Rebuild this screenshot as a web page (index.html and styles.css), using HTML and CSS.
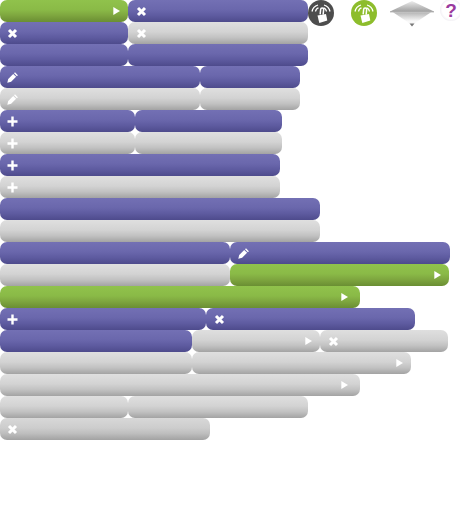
FILE: index.html
```html
<!DOCTYPE html>
<html lang="en">
<head>
  <meta charset="UTF-8">
  <title>Buttons</title>
  <link rel="stylesheet" href="styles.css">
</head>
<body>

  <svg class="defs" width="0" height="0">
    <symbol id="i-x" viewBox="0 0 11 11"><path d="M2 2l7 7M9 2l-7 7" fill="none" stroke="currentColor" stroke-width="3"/></symbol>
    <symbol id="i-plus" viewBox="0 0 11 11"><path d="M5.5 0.5v10M0.500 5.500h10" fill="none" stroke="currentColor" stroke-width="2.400"/></symbol>
    <symbol id="i-pen" viewBox="0 0 11 11"><path d="M0.300 10.700l0.900-3.800 5-5 2.900 2.900-5 5zM7 1.300l1-1 2.900 2.900-1 1z" fill="currentColor"/></symbol>
    <symbol id="i-arrow" viewBox="0 0 7 8"><path d="M0.300 0l6.700 4-6.700 4z" fill="currentColor"/></symbol>
    <symbol id="i-touch" viewBox="0 0 26 26">
      <path d="M4 11.500Q5 6.500 10 5M7.500 11.500Q8 8.500 10.500 7.800M22 11.500Q21 6.500 16 5M18.500 11.500Q18 8.500 15.500 7.800" fill="none" stroke="#fff" stroke-width="1.300"/>
      <path d="M12.500 14.500v-5a1.500 1.500 0 0 1 3 0v5" fill="none" stroke="#fff" stroke-width="1.500" transform="rotate(6 14 11)"/>
      <path d="M9.500 15.500l8.500-1.500 1.300 6.500-8 2.500z" fill="#fff"/>
    </symbol>
  </svg>

  <div class="row">
    <div class="seg green w128 end"><svg class="arrow"><use href="#i-arrow"/></svg></div>
    <div class="seg purple w180"><svg class="ico"><use href="#i-x"/></svg></div>
    <div class="tools">
      <svg class="round dark"><use href="#i-touch"/></svg>
      <svg class="round lime"><use href="#i-touch"/></svg>
      <svg class="diamond" viewBox="0 0 44 27">
        <defs>
          <linearGradient id="upper" x1="0" y1="0" x2="0" y2="1">
            <stop offset="0" stop-color="#ececec"/>
            <stop offset="1" stop-color="#a0a0a0"/>
          </linearGradient>
          <linearGradient id="lower" x1="0" y1="0" x2="0" y2="1">
            <stop offset="0" stop-color="#b4b4b4"/>
            <stop offset="0.7" stop-color="#fafafa"/>
            <stop offset="1" stop-color="#f0f0f0"/>
          </linearGradient>
        </defs>
        <path d="M22 1L44 11.500H0z" fill="url(#upper)"/>
        <path d="M0 11.500h44v0.800H0z" fill="#858585"/>
        <path d="M3 12.300h38L22 25z" fill="url(#lower)"/>
        <path d="M19.500 23.500h5l-2.500 3z" fill="#777"/>
      </svg>
      <div class="help">?</div>
    </div>
  </div>

  <div class="row">
    <div class="seg purple w128"><svg class="ico"><use href="#i-x"/></svg></div>
    <div class="seg gray w180"><svg class="ico"><use href="#i-x"/></svg></div>
  </div>
  <div class="row">
    <div class="seg purple w128"></div>
    <div class="seg purple w180"></div>
  </div>
  <div class="row">
    <div class="seg purple w200"><svg class="ico"><use href="#i-pen"/></svg></div>
    <div class="seg purple w100"></div>
  </div>
  <div class="row">
    <div class="seg gray w200"><svg class="ico"><use href="#i-pen"/></svg></div>
    <div class="seg gray w100"></div>
  </div>
  <div class="row">
    <div class="seg purple w135"><svg class="ico"><use href="#i-plus"/></svg></div>
    <div class="seg purple w147"></div>
  </div>
  <div class="row">
    <div class="seg gray w135"><svg class="ico"><use href="#i-plus"/></svg></div>
    <div class="seg gray w147"></div>
  </div>
  <div class="row">
    <div class="seg purple w280"><svg class="ico"><use href="#i-plus"/></svg></div>
  </div>
  <div class="row">
    <div class="seg gray w280"><svg class="ico"><use href="#i-plus"/></svg></div>
  </div>
  <div class="row">
    <div class="seg purple w320"></div>
  </div>
  <div class="row">
    <div class="seg gray w320"></div>
  </div>
  <div class="row">
    <div class="seg purple w230"></div>
    <div class="seg purple w220"><svg class="ico"><use href="#i-pen"/></svg></div>
  </div>
  <div class="row">
    <div class="seg gray w230"></div>
    <div class="seg green w219 end"><svg class="arrow"><use href="#i-arrow"/></svg></div>
  </div>
  <div class="row">
    <div class="seg green w360 end far"><svg class="arrow"><use href="#i-arrow"/></svg></div>
  </div>
  <div class="row">
    <div class="seg purple w206"><svg class="ico"><use href="#i-plus"/></svg></div>
    <div class="seg purple w209"><svg class="ico"><use href="#i-x"/></svg></div>
  </div>
  <div class="row">
    <div class="seg purple w192"></div>
    <div class="seg gray w128 end"><svg class="arrow"><use href="#i-arrow"/></svg></div>
    <div class="seg gray w128"><svg class="ico"><use href="#i-x"/></svg></div>
  </div>
  <div class="row">
    <div class="seg gray w192"></div>
    <div class="seg gray w219 end"><svg class="arrow"><use href="#i-arrow"/></svg></div>
  </div>
  <div class="row">
    <div class="seg gray w360 end far"><svg class="arrow"><use href="#i-arrow"/></svg></div>
  </div>
  <div class="row">
    <div class="seg gray w128"></div>
    <div class="seg gray w180"></div>
  </div>
  <div class="row">
    <div class="seg gray dim w210"><svg class="ico"><use href="#i-x"/></svg></div>
  </div>

</body>
</html>
```

FILE: styles.css
```css
body {
  margin: 0;
  overflow: hidden;
  background-color: #fff;
  font-family: "Liberation Sans", Arial, sans-serif;
}
.defs {
  display: block;
  height: 0;
}
.row {
  display: flex;
  height: 22px;
}
.seg {
  display: flex;
  flex: none;
  align-items: center;
  box-sizing: border-box;
  height: 22px;
  padding: 0 8px 0 7px;
  border-radius: 7px;
  color: #fff;
}
.seg + .seg {
  padding-left: 8px;
}
.end {
  justify-content: flex-end;
}
.far {
  padding-right: 12px;
}
.purple {
  background: linear-gradient(#7370b4, #6a67ac 45%, #5e5ba0 70%, #4e4b8c);
}
.gray {
  background: linear-gradient(#dfdfdf, #d3d3d3 45%, #c1c1c1 72%, #a3a3a3);
}
.green {
  background: linear-gradient(#90c24c, #8aba47 45%, #7ea63f 70%, #6a8e33);
}
.dim {
  background: linear-gradient(#d8d8d8, #cdcdcd 45%, #bebebe 70%, #a2a2a2);
}
.ico {
  width: 11px;
  height: 11px;
}
.arrow {
  width: 7px;
  height: 8px;
}
.w100 { width: 100px; }
.w128 { width: 128px; }
.w135 { width: 135px; }
.w147 { width: 147px; }
.w180 { width: 180px; }
.w192 { width: 192px; }
.w200 { width: 200px; }
.w206 { width: 206px; }
.w209 { width: 209px; }
.w210 { width: 210px; }
.w219 { width: 219px; }
.w220 { width: 220px; }
.w230 { width: 230px; }
.w280 { width: 280px; }
.w320 { width: 320px; }
.w360 { width: 360px; }

/* top right icons, taller than the row */
.tools {
  display: flex;
  flex: none;
  align-items: flex-start;
  height: 22px;
}
.round {
  flex: none;
  width: 26px;
  height: 26px;
  border-radius: 50%;
}
.dark {
  background-color: #4d4d4d;
}
.lime {
  margin-left: 17px;
  background-color: #8dbd2c;
}
.diamond {
  flex: none;
  width: 44px;
  height: 27px;
  margin-left: 13px;
}
.help {
  flex: none;
  width: 22px;
  height: 22px;
  margin-top: -1px;
  margin-left: 6px;
  border-radius: 50%;
  background: radial-gradient(#fff 55%, #e6e2ea 85%, #d4d0da);
  color: #9a3a9e;
  font-size: 19px;
  font-weight: bold;
  line-height: 23px;
  text-align: center;
}
```
